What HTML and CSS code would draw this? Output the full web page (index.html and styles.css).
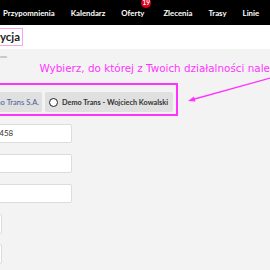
FILE: index.html
```html
<!DOCTYPE html>
<html lang="pl">
<head>
<meta charset="utf-8">
<link rel="stylesheet" href="styles.css">
</head>
<body>
<nav class="topnav">
  <a class="nav-item">Przypomnienia</a>
  <a class="nav-item">Kalendarz</a>
  <a class="nav-item has-badge">Oferty<span class="badge">19</span></a>
  <a class="nav-item">Zlecenia</a>
  <a class="nav-item">Trasy</a>
  <a class="nav-item">Linie</a>
</nav>
<div class="tabbar">
  <div class="tab">Edycja</div>
</div>
<main class="content">
  <div class="req">Wymagane</div>
  <div class="row-hint">
    <div class="input off"></div>
    <div class="hint">Wybierz, do której z Twoich działalności nale</div>
  </div>
  <div class="choice-box">
    <button class="opt selected">Demo Trans S.A.</button>
    <button class="opt"><span class="radio"></span>Demo Trans - Wojciech Kowalski</button>
  </div>
  <div class="field first"><div class="input wide">12458</div></div>
  <div class="field"><div class="input wide"></div></div>
  <div class="field"><div class="input wide"></div></div>
  <div class="field"><div class="input off"></div></div>
  <div class="field"><div class="input off"></div></div>
  <svg class="arrow" width="90" height="30" viewBox="0 0 90 30">
    <line x1="88" y1="1" x2="5" y2="24" stroke="#ff33ff" stroke-width="1.4"/>
    <polygon points="2,25 8,20.5 9.5,25.5" fill="#ff33ff"/>
  </svg>
</main>
</body>
</html>
```
FILE: styles.css
```css
* { box-sizing: border-box; }
html, body { margin: 0; padding: 0; }
body {
  width: 270px;
  height: 270px;
  overflow: hidden;
  background: #f3f3f3;
  font-family: Lato, "Open Sans", sans-serif;
  position: relative;
}
.topnav {
  height: 25px;
  background: #000;
  display: flex;
  align-items: center;
  padding-left: 3px;
  gap: 16px;
  white-space: nowrap;
}
.nav-item {
  color: #fff;
  font-weight: 700;
  font-size: 7.8px;
  position: relative;
}
.nav-item.has-badge { margin-right: 3px; }
.badge {
  position: absolute;
  left: 20px;
  top: -10px;
  width: 10px;
  height: 10px;
  border-radius: 50%;
  background: #e3001b;
  color: #fff;
  font-size: 6.5px;
  line-height: 10px;
  text-align: center;
}
.tabbar {
  height: 24px;
  background: #fff;
  padding-top: 3px;
  display: flex;
}
.tab {
  margin-left: -17px;
  height: 18px;
  padding: 0 2px 0 4px;
  border: 1px solid #f7a3ee;
  border-left: none;
  font-size: 11.5px;
  font-weight: 700;
  color: #222;
  line-height: 16px;
}
.content {
  padding-top: 5px;
}
.req {
  margin-left: -15px;
  font-size: 4.5px;
  color: #888;
  height: 8px;
  line-height: 6px;
}
.row-hint {
  display: flex;
  align-items: flex-start;
  height: 21px;
}
.input {
  background: #fff;
  border: 1px solid #dcdcdc;
  border-radius: 2px;
  height: 19px;
  font-size: 8px;
  color: #333;
  line-height: 17px;
  padding-left: 5px;
  white-space: nowrap;
}
.input.off {
  width: 60px;
  margin-left: -58px;
  height: 20px;
}
.input.wide {
  width: 100px;
  margin-left: -28px;
  padding-left: 17px;
}
.hint {
  margin-left: 46px;
  white-space: nowrap;
  font-family: "DejaVu Sans", sans-serif;
  font-size: 10.4px;
  color: #ff33ff;
  line-height: 13px;
}
.choice-box {
  margin-left: -30px;
  width: 208px;
  height: 33px;
  border: 2px solid #ff33ff;
  display: flex;
  justify-content: flex-end;
  gap: 3px;
  padding: 7px 3px 0 0;
}
.opt {
  height: 20px;
  border: none;
  border-radius: 2px;
  background: #e0e0e0;
  font-family: Lato, sans-serif;
  font-weight: 700;
  font-size: 7.3px;
  color: #333;
  padding: 0 5px 0 4px;
  display: flex;
  align-items: center;
  white-space: nowrap;
}
.opt.selected {
  color: #4a5aa0;
  font-weight: 400;
  font-size: 7.6px;
  width: 73px;
  padding-right: 3px;
  justify-content: flex-end;
}
.opt .radio {
  width: 9px;
  height: 9px;
  border: 1.3px solid #222;
  border-radius: 50%;
  margin-right: 4px;
  background: #fff;
  flex: none;
}
.field {
  margin-top: 11px;
  height: 19px;
  display: flex;
}
.field.first { margin-top: 8px; }
.arrow {
  position: absolute;
  left: 186px;
  top: 76px;
}
```
